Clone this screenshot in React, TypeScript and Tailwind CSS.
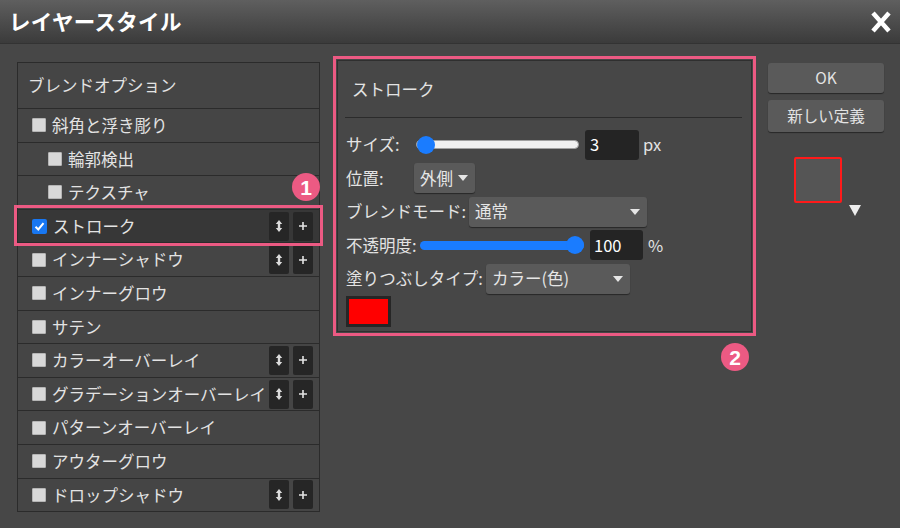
import React from "react";

type Row = {
  label: string;
  indent?: boolean;
  checked?: boolean;
  btns?: boolean;
  active?: boolean;
};

const rows: Row[] = [
  { label: "斜角と浮き彫り" },
  { label: "輪郭検出", indent: true },
  { label: "テクスチャ", indent: true },
  { label: "ストローク", checked: true, btns: true, active: true },
  { label: "インナーシャドウ", btns: true },
  { label: "インナーグロウ" },
  { label: "サテン" },
  { label: "カラーオーバーレイ", btns: true },
  { label: "グラデーションオーバーレイ", btns: true },
  { label: "パターンオーバーレイ" },
  { label: "アウターグロウ" },
  { label: "ドロップシャドウ", btns: true },
];

function Check({ checked }: { checked?: boolean }) {
  if (checked) {
    return (
      <span className="flex h-[15px] w-[15px] shrink-0 items-center justify-center rounded-[2px] bg-[#1877f2]">
        <svg width="11" height="11" viewBox="0 0 11 11">
          <path d="M1.5 5.8 L4.3 8.5 L9.5 2.2" fill="none" stroke="white" strokeWidth="2" />
        </svg>
      </span>
    );
  }
  return <span className="h-[14px] w-[14px] shrink-0 rounded-[1px] border border-[#b5b5b5] bg-[#d8d8d8]" />;
}

function Caret() {
  return (
    <svg width="10" height="6" viewBox="0 0 10 6" className="shrink-0">
      <path d="M0 0 H10 L5 6 Z" fill="#e6e6e6" />
    </svg>
  );
}

function SmallButtons() {
  return (
    <div className="flex shrink-0 gap-[4px]">
      <span className="flex h-[29px] w-[20px] items-center justify-center rounded-[2px] bg-[#262626]">
        <svg width="8" height="14" viewBox="0 0 8 14">
          <path d="M4 1 L7.2 5 H5.2 V9 H7.2 L4 13 L0.8 9 H2.8 V5 H0.8 Z" fill="#dcdcdc" />
        </svg>
      </span>
      <span className="flex h-[29px] w-[20px] items-center justify-center rounded-[2px] bg-[#262626]">
        <svg width="10" height="10" viewBox="0 0 10 10">
          <path d="M5 1 V9 M1 5 H9" stroke="#e4e4e4" strokeWidth="1.6" />
        </svg>
      </span>
    </div>
  );
}

function Badge({ n }: { n: string }) {
  return (
    <span className="flex h-[28px] w-[28px] items-center justify-center rounded-full bg-[#ec5a83] font-['Liberation_Sans',sans-serif] text-[21px] font-bold leading-none text-white">
      {n}
    </span>
  );
}

function Dropdown({ text, w }: { text: string; w: string }) {
  return (
    <div
      className={`flex h-[30px] ${w} items-center justify-between rounded-[3px] bg-[#5a5a5a] pl-[6px] pr-[7px] text-[16.5px] text-[#e6e6e6] shadow-[0_1px_1px_rgba(0,0,0,0.45)]`}
    >
      <span>{text}</span>
      <Caret />
    </div>
  );
}

export default function App() {
  return (
    <div className="h-[528px] w-[900px] overflow-hidden bg-[#474747] font-['Noto_Sans_CJK_JP','Liberation_Sans',sans-serif] text-[#e3e3e3]">
      {/* title bar */}
      <div className="flex h-[44px] items-center justify-between border-b border-[#333] bg-gradient-to-b from-[#5f5f5f] to-[#3b3b3b] pl-[9px] pr-[8px]">
        <h1 className="text-[21.5px] font-bold tracking-[0.3px] text-white">レイヤースタイル</h1>
        <svg width="22" height="22" viewBox="0 0 22 22">
          <path d="M3 2 L19 20 M19 2 L3 20" stroke="white" strokeWidth="4.5" />
        </svg>
      </div>

      <div className="flex items-start pt-[12px]">
        {/* left list */}
        <div className="relative ml-[17px] mt-[6px] w-[303px] border border-[#2b2b2b] bg-[#454545]">
          <div className="flex h-[45px] items-center pl-[10px] text-[16.5px]">ブレンドオプション</div>
          {rows.map((r) => (
            <div
              key={r.label}
              className={`flex h-[33.6px] items-center border-t border-[#2b2b2b] pr-[6px] text-[16.5px] ${
                r.indent ? "pl-[30px]" : "pl-[14px]"
              } ${
                r.active
                  ? "relative z-10 bg-[#373737] outline-[3px] outline-offset-[1px] outline-[#ec5a83]"
                  : ""
              }`}
            >
              <Check checked={r.checked} />
              <span className="ml-[6px] flex-1 whitespace-nowrap leading-none">{r.label}</span>
              {r.btns && <SmallButtons />}
            </div>
          ))}
          <div className="absolute left-[274px] top-[110px] z-20">
            <Badge n="1" />
          </div>
        </div>

        {/* stroke settings */}
        <div className="relative ml-[13px] w-[423px] border-[3px] border-[#ec5a83] p-[1px]">
          <div className="border border-[#2f2f2f] bg-[#474747] pb-[4px]">
            <div className="flex h-[56px] items-center pl-[14px] text-[16.5px]">ストローク</div>
            <div className="ml-[7px] mr-[9px] h-px bg-[#2b2b2b]" />
            <div className="mt-[10px] pl-[8px] text-[16.5px]">
              <div className="flex h-[33.5px] items-center">
                <span className="w-[70px]">サイズ:</span>
                <div className="relative h-[9px] w-[163px] rounded-full border border-[#a0a0a0] bg-[#f0f0f0]">
                  <span className="absolute left-0 top-[-5px] h-[18px] w-[18px] rounded-full bg-[#1a7cff]" />
                </div>
                <div className="ml-[6px] flex h-[30px] w-[54px] items-center rounded-[3px] bg-[#242424] pl-[5px] text-white">
                  3
                </div>
                <span className="ml-[4px]">px</span>
              </div>
              <div className="flex h-[33.5px] items-center">
                <span className="w-[68px]">位置:</span>
                <Dropdown text="外側" w="w-[61px]" />
              </div>
              <div className="flex h-[33.5px] items-center">
                <span className="w-[123px]">ブレンドモード:</span>
                <Dropdown text="通常" w="w-[178px]" />
              </div>
              <div className="flex h-[33.5px] items-center">
                <span className="w-[74px]">不透明度:</span>
                <div className="relative h-[9px] w-[164px] rounded-full bg-[#1a7cff]">
                  <span className="absolute right-0 top-[-5px] h-[18px] w-[18px] rounded-full bg-[#1a7cff]" />
                </div>
                <div className="ml-[6px] flex h-[30px] w-[53px] items-center rounded-[3px] bg-[#242424] pl-[4px] text-white">
                  100
                </div>
                <span className="ml-[5px]">%</span>
              </div>
              <div className="flex h-[33.5px] items-center">
                <span className="w-[140px]">塗りつぶしタイプ:</span>
                <Dropdown text="カラー(色)" w="w-[144px]" />
              </div>
              <div className="h-[31px] w-[45px] border-[3px] border-[#262626] bg-[#ff0000]" />
            </div>
          </div>
          <div className="absolute right-[4px] top-[284px]">
            <Badge n="2" />
          </div>
        </div>

        {/* right buttons */}
        <div className="ml-[12px] mt-[7px] flex w-[116px] flex-col">
          <button className="h-[30px] rounded-[3px] bg-[#5a5a5a] text-[15.5px] text-[#e3e3e3] shadow-[0_1px_1px_rgba(0,0,0,0.45)]">
            OK
          </button>
          <button className="mt-[7px] h-[32px] rounded-[3px] bg-[#5a5a5a] text-[15.5px] text-[#e3e3e3] shadow-[0_1px_1px_rgba(0,0,0,0.45)]">
            新しい定義
          </button>
          <div className="mt-[25px] flex items-end pl-[26px]">
            <div className="h-[46px] w-[48px] rounded-[2px] border-2 border-[#ff1a1a] bg-[#555]" />
            <svg width="12" height="11" viewBox="0 0 12 11" className="mb-[-13px] ml-[7px]">
              <path d="M0 0 H12 L6 11 Z" fill="#eeeeee" />
            </svg>
          </div>
        </div>
      </div>
    </div>
  );
}
